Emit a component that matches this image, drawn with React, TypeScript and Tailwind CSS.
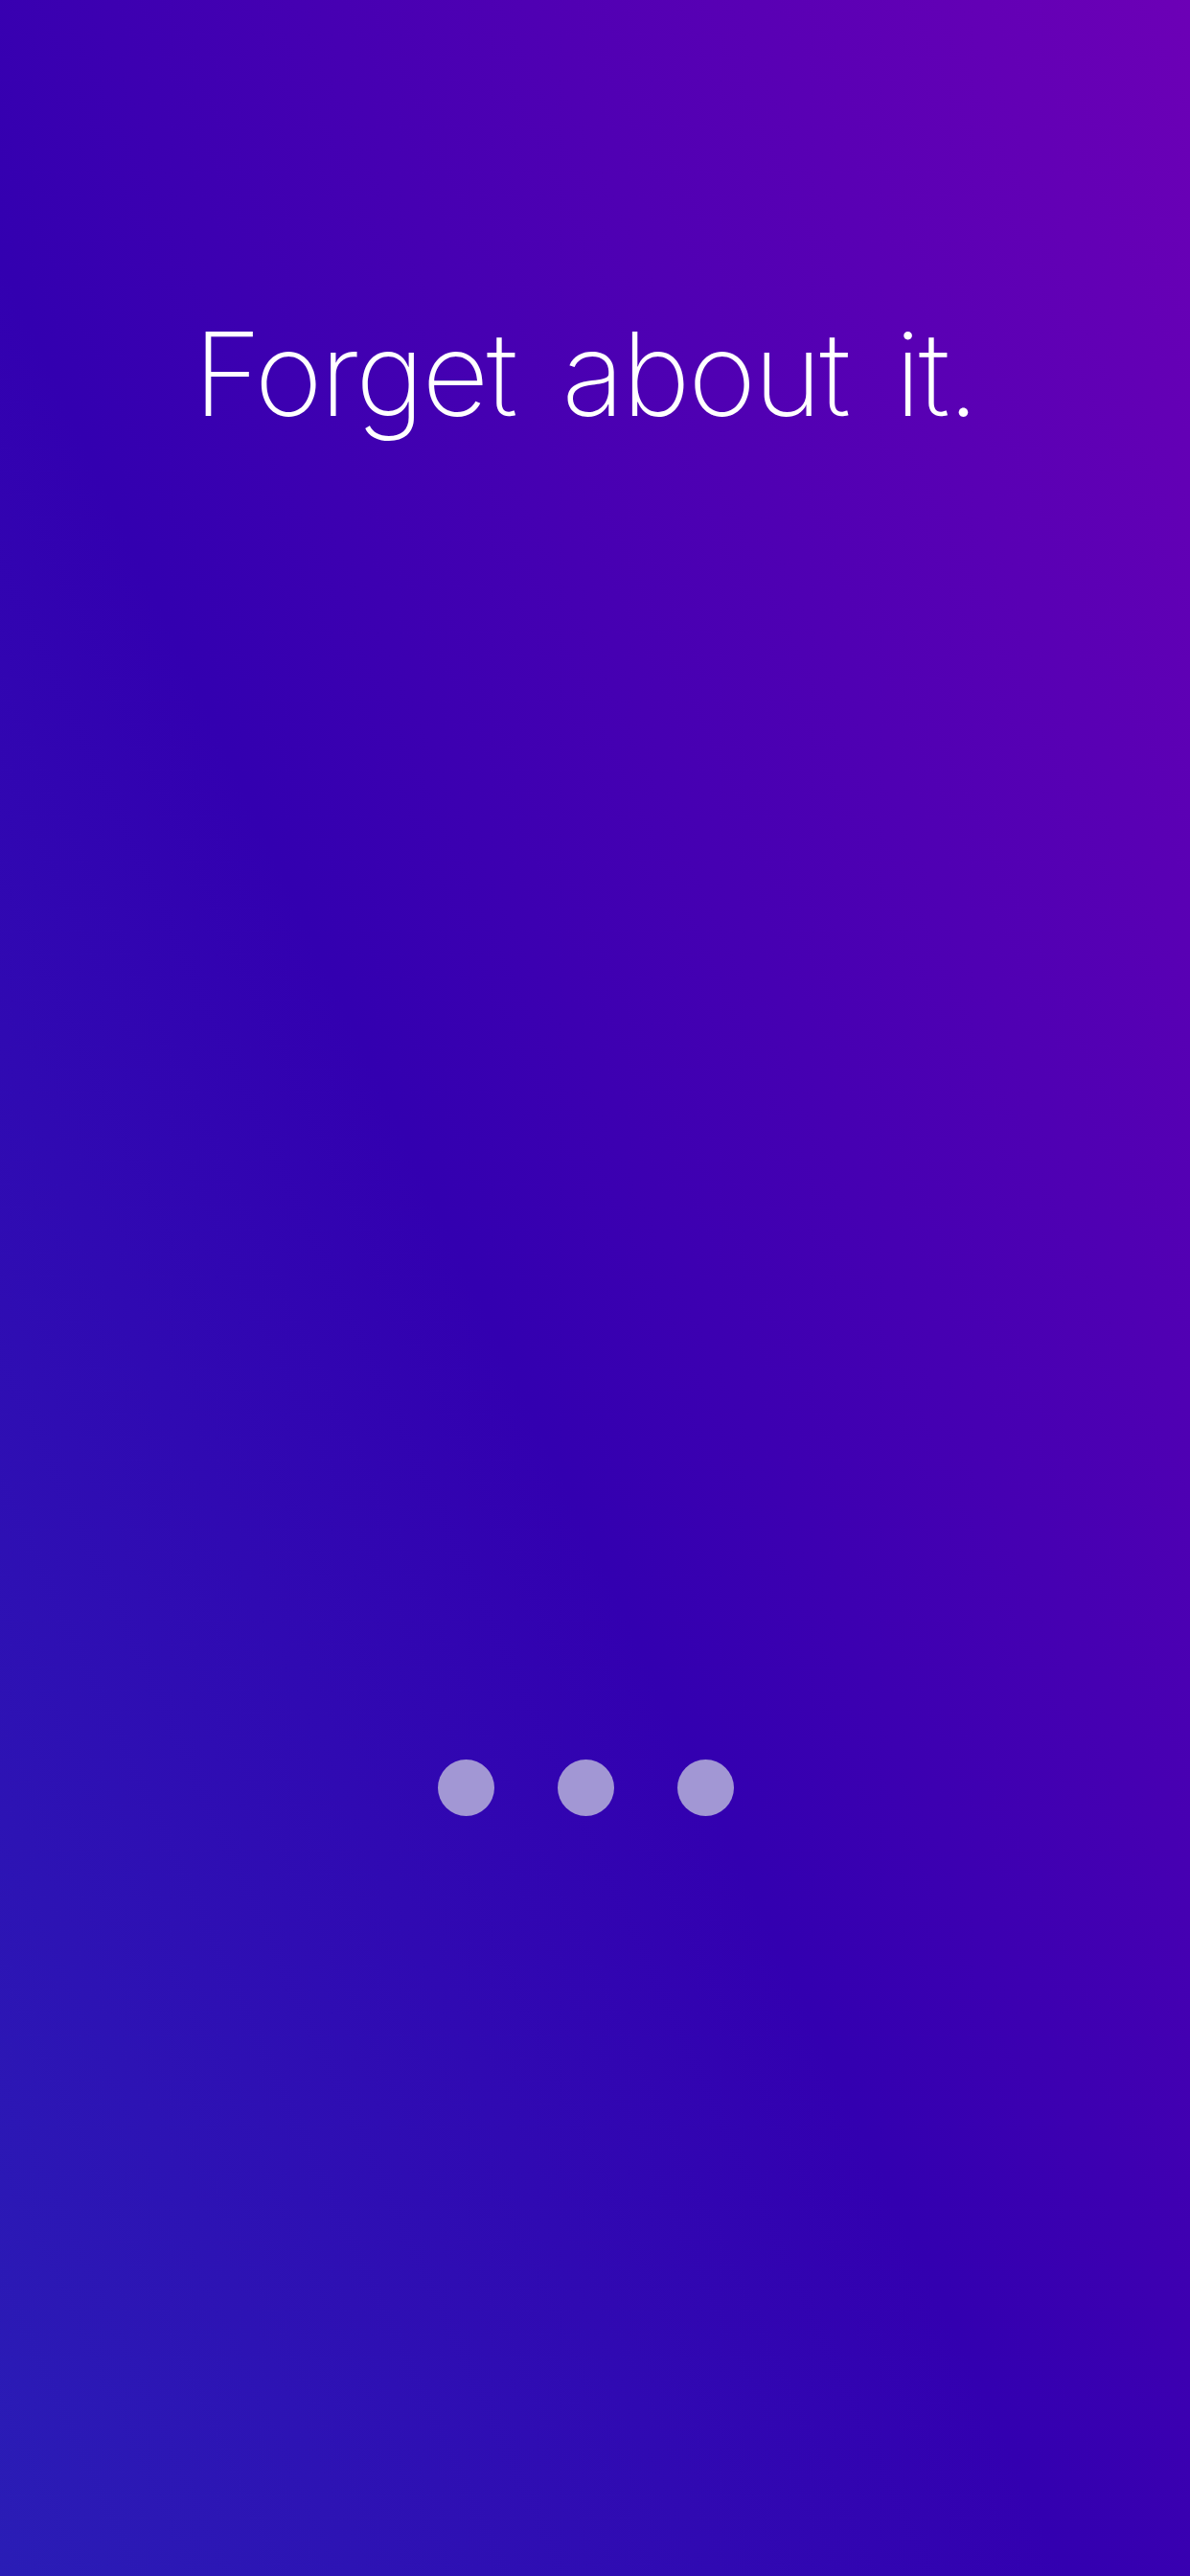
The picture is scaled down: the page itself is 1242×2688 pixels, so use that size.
export default function App() {
  return (
    <div className="relative w-full h-[2688px] overflow-hidden bg-[linear-gradient(to_top_right,#2a1db6_0%,#3300b0_45%,#6c00b6_100%)] font-['Inter','Liberation_Sans',sans-serif]">
      <div className="flex flex-col items-center pt-[318px] pr-[20px]">
        <h1 className="text-[121px] leading-[1.2] font-extralight tracking-[-0.02em] [word-spacing:17px] text-white">
          Forget about it.
        </h1>
        <div className="mt-[1373px] flex items-center gap-[66px]">
          <span className="h-[59px] w-[59px] rounded-full bg-[#a297d4]" />
          <span className="h-[59px] w-[59px] rounded-full bg-[#a297d4]" />
          <span className="h-[59px] w-[59px] rounded-full bg-[#a297d4]" />
        </div>
      </div>
    </div>
  );
}
